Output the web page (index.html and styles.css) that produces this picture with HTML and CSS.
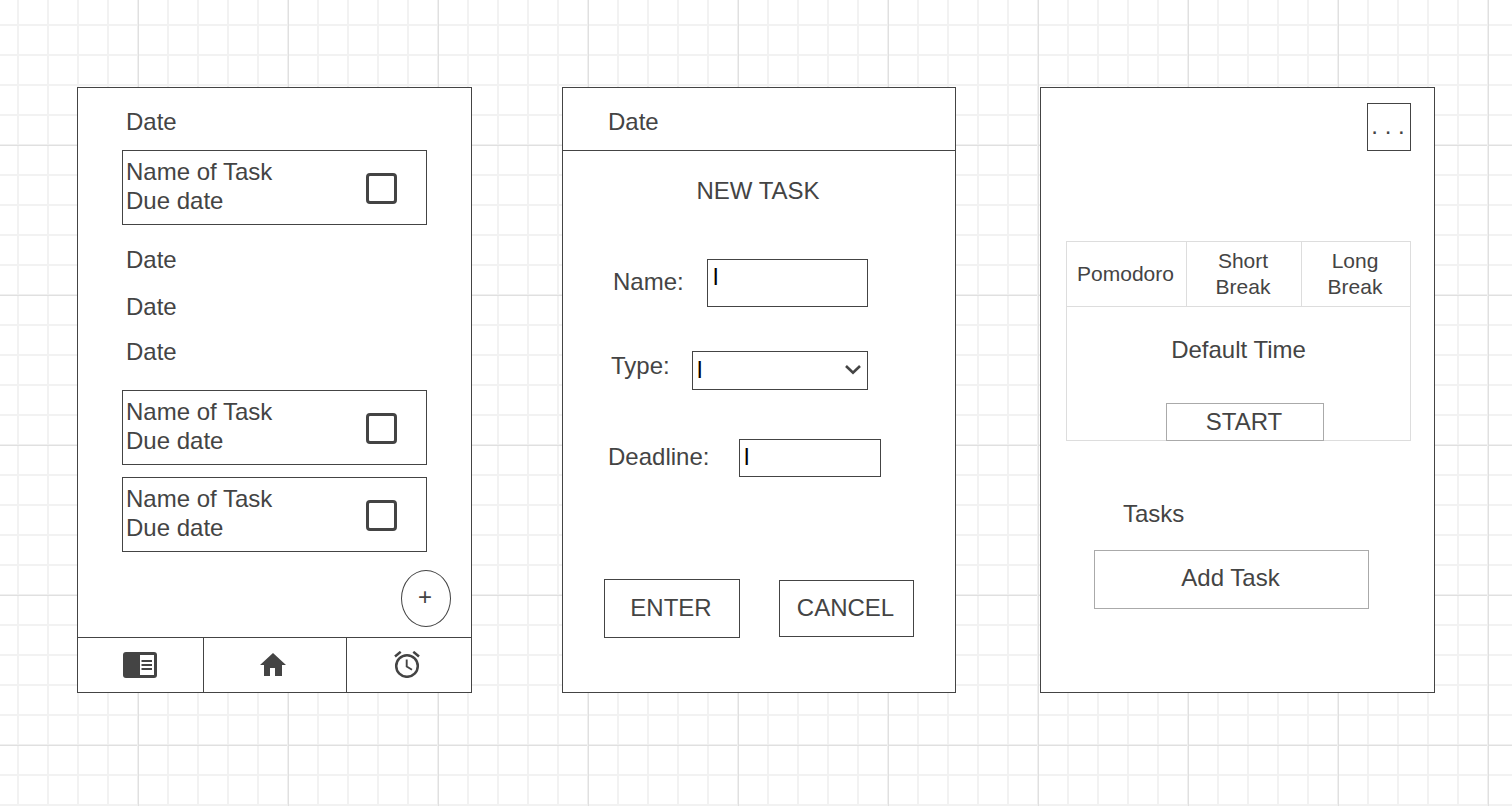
FILE: index.html
```html
<!DOCTYPE html>
<html lang="en">
<head>
<meta charset="utf-8">
<title>Task planner wireframes</title>
<link rel="stylesheet" href="styles.css">
</head>
<body>
<main class="board">
  <section class="screen screen-list">
    <div class="agenda">
      <h2 class="day">Date</h2>
      <label class="task"><span class="task-text">Name of Task<br>Due date</span><input class="tick" type="checkbox"></label>
      <h2 class="day day-second">Date</h2>
      <h2 class="day day-third">Date</h2>
      <h2 class="day day-fourth">Date</h2>
      <label class="task task-spaced"><span class="task-text">Name of Task<br>Due date</span><input class="tick" type="checkbox"></label>
      <label class="task"><span class="task-text">Name of Task<br>Due date</span><input class="tick" type="checkbox"></label>
    </div>
    <button class="add" type="button">+</button>
    <nav class="tabs">
      <a class="tab" href="#reader" aria-label="Reader">
        <svg width="34" height="26" viewBox="0 0 34 26"><rect width="34" height="26" rx="3" fill="#444"/><path d="M17 3h14v20H17z" fill="#fff"/><path d="M18.500 9h10.500M18.500 13h10.500M18.500 17h10.500" stroke="#444" stroke-width="2"/></svg>
      </a>
      <a class="tab" href="#home" aria-label="Home">
        <svg width="26" height="23" viewBox="0 0 26 23"><path d="M13 0 0 12h4v11h6v-8h5v8h7V12h4z" fill="#444"/></svg>
      </a>
      <a class="tab" href="#alarm" aria-label="Alarm">
        <svg width="26" height="27" viewBox="0 0 26 27" fill="none" stroke="#444"><circle cx="13" cy="15" r="10.800" stroke-width="2.500"/><path d="M12.700 8.500v7l5.300 3.200" stroke-width="1.900"/><path d="m1 5.500 5.700-4.700M25 5.500 19.300.8" stroke-width="2.500"/></svg>
      </a>
    </nav>
  </section>

  <section class="screen screen-form">
    <header class="form-date">Date</header>
    <h1 class="form-title">NEW TASK</h1>
    <form class="form">
      <div class="field field-name"><label class="label" for="name">Name:</label><input class="box box-name" id="name" type="text" value="l"></div>
      <div class="field field-type"><label for="type">Type:</label>
        <span class="picker"><select class="box box-type" id="type"><option>l</option></select>
          <svg class="chevron" width="16" height="10" viewBox="0 0 16 10"><path d="m1 1 7 6.800L15 1" fill="none" stroke="#444" stroke-width="2.600"/></svg></span>
      </div>
      <div class="field field-deadline"><label class="label" for="deadline">Deadline:</label><input class="box box-deadline" id="deadline" type="text" value="l"></div>
      <div class="actions"><button class="enter" type="button">ENTER</button><button class="cancel" type="button">CANCEL</button></div>
    </form>
  </section>

  <section class="screen screen-timer">
    <button class="menu" type="button">. . .</button>
    <div class="timer">
      <div class="modes">
        <button class="mode" type="button">Pomodoro</button>
        <button class="mode" type="button">Short<br>Break</button>
        <button class="mode" type="button">Long<br>Break</button>
      </div>
      <p class="time">Default Time</p>
      <button class="start" type="button">START</button>
    </div>
    <h2 class="tasks-title">Tasks</h2>
    <button class="add-task" type="button">Add Task</button>
  </section>
</main>
</body>
</html>
```
FILE: styles.css
```css
* { box-sizing: border-box; }

body {
  margin: 0;
  min-height: 100vh;
  color: #444;
  font: 24px/29px "Liberation Sans", Arial, sans-serif;
  background-color: #fff;
  background-image:
    linear-gradient(90deg, #f0f0f0 1px, #e0e0e0 1px, #e0e0e0 2px, transparent 2px),
    linear-gradient(#f0f0f0 1px, #e0e0e0 1px, #e0e0e0 2px, transparent 2px),
    linear-gradient(90deg, #f2f2f2 2px, transparent 2px),
    linear-gradient(#f2f2f2 2px, transparent 2px);
  background-size: 150px 150px, 150px 150px, 30px 30px, 30px 30px;
  background-position: 137px 0, 0 144px, 17px 0, 0 24px;
}

h1, h2, p { margin: 0; font-size: inherit; font-weight: normal; }

button, input, select {
  margin: 0;
  padding: 0;
  border: 1px solid #444;
  border-radius: 0;
  background: #fff;
  color: inherit;
  font: inherit;
}

svg { display: block; }

.board {
  display: grid;
  grid-template-columns: 395fr 90px 394fr 84px 395fr;
  padding: 87px 77px;
}

.screen {
  display: flex;
  flex-direction: column;
  min-height: 606px;
  border: 1px solid #444;
  background: #fff;
}

.screen-list { grid-column: 1; }
.screen-form { grid-column: 3; }
.screen-timer { grid-column: 5; padding: 15px 23px 0 25px; }

/* Task list */
.agenda { padding: 19px 44px 0; }
.day { padding-left: 4px; margin-bottom: 14px; }
.day-second { margin: 20px 0 18px; }
.day-third { margin: 0 0 16px; }
.day-fourth { margin: 0; }

.task {
  display: flex;
  justify-content: space-between;
  align-items: flex-start;
  padding: 6px 29px 9px 3px;
  border: 1px solid #444;
}
.task + .task { margin-top: 12px; }
.day + .task-spaced { margin-top: 24px; }

.tick {
  appearance: none;
  width: 31px;
  height: 31px;
  margin-top: 16px;
  border: 3px solid #444;
  border-radius: 4px;
}

.add {
  align-self: flex-end;
  width: 50px;
  height: 57px;
  margin: 18px 20px 10px;
  padding: 0 2px 5px 0;
  border-radius: 50%;
}

.tabs {
  display: grid;
  grid-template-columns: 125fr 143fr 125fr;
  flex: 1;
  border-top: 1px solid #444;
}
.tab { display: flex; align-items: center; justify-content: center; padding-right: 1px; }
.tab + .tab { padding: 0 5px 1px 0; border-left: 1px solid #444; }

/* New task form */
.form-date { padding: 19px 45px 14px; border-bottom: 1px solid #444; }
.form-title { margin-top: 25px; padding-right: 2px; text-align: center; }
.form { padding-top: 54px; }

.field { display: flex; justify-content: space-between; align-items: center; }
.field-name { padding: 0 87px 0 50px; }
.field-type { align-items: flex-start; margin-top: 44px; padding: 0 87px 0 48px; }
.field-deadline { margin-top: 49px; padding: 0 74px 0 45px; }
.label { padding-bottom: 4px; }

.box { padding: 3px 4px 5px; color: #000; }
.box-name { width: 161px; padding: 2px 5px 15px; }
.box-type { width: 176px; appearance: none; }
.box-deadline { width: 142px; padding: 2px 4px 5px; }

.picker { display: grid; align-items: center; }
.picker > * { grid-area: 1 / 1; }
.chevron { justify-self: end; margin: 0 7px 2px 0; pointer-events: none; }

.actions {
  display: flex;
  justify-content: space-between;
  align-items: center;
  margin-top: 102px;
  padding: 0 41px;
}
.enter { width: 136px; padding: 13px 2px 15px 0; }
.cancel { width: 135px; padding: 12px 2px 14px 0; }

/* Timer */
.menu { align-self: flex-end; width: 44px; padding: 7px 2px 10px 0; white-space: nowrap; }

.timer { margin-top: 90px; border: 1px solid #ddd; }
.modes {
  display: grid;
  grid-template-columns: 119fr 115fr 109fr;
  border-bottom: 1px solid #ddd;
}
.mode { padding: 6px 2px 6px 0; border: 0; font-size: 21px; line-height: 26px; }
.mode + .mode { border-left: 1px solid #ddd; }
.time { margin-top: 28px; text-align: center; }
.start {
  display: block;
  width: 158px;
  margin: 39px 0 -1px 99px;
  padding: 3px 2px 4px 0;
  border-color: #aaa;
}

.tasks-title { margin-top: 58px; padding-left: 57px; }
.add-task { margin: 22px 42px 0 28px; padding: 12px 2px 16px 0; border-color: #aaa; }
```
